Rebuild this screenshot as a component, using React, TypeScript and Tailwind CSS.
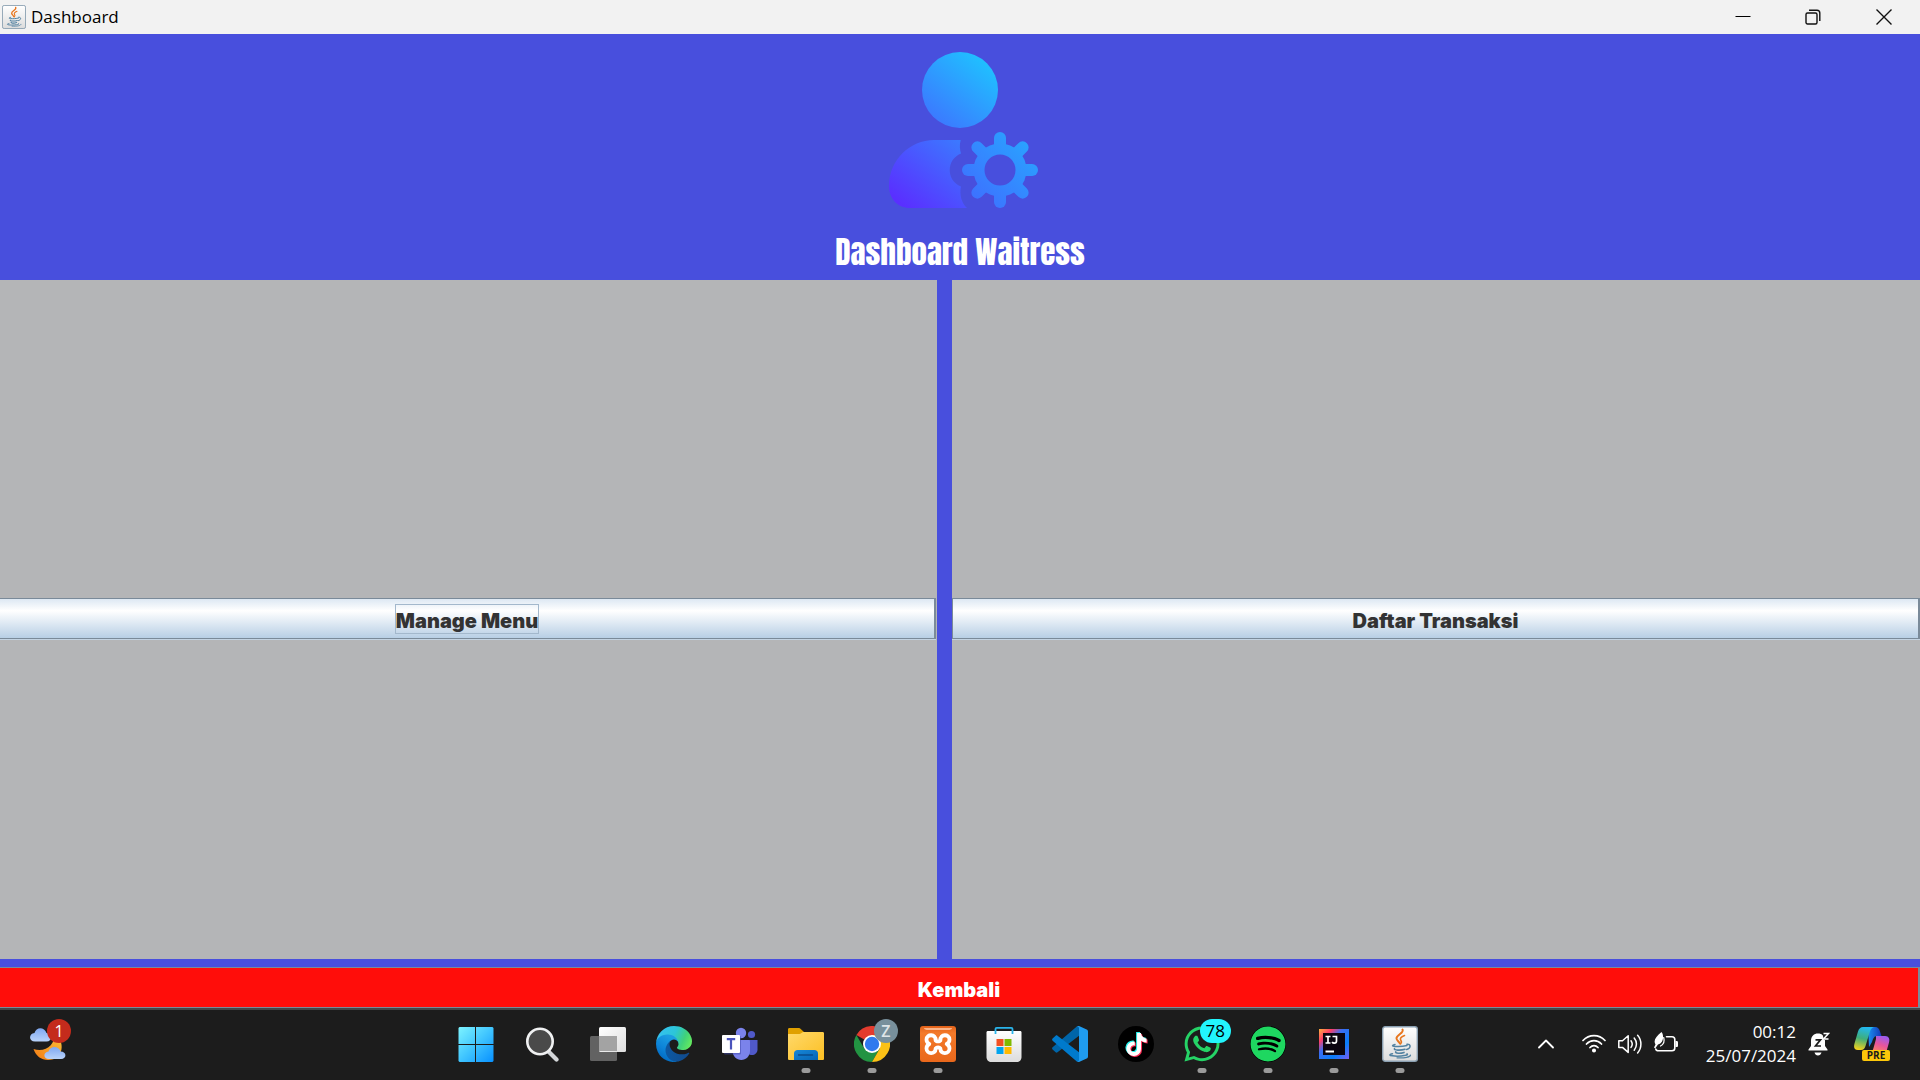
import type { ReactNode } from "react";
import { FaSpotify, FaTiktok, FaWhatsapp } from "react-icons/fa";

const UI = "font-['Open_Sans','Noto_Sans',sans-serif]";
const HEAVY = "font-['Inter','Liberation_Sans',sans-serif] font-black text-xl leading-6";

function JavaIcon({ className }: { className: string }) {
  return (
    <svg viewBox="0 0 36 36" className={className} aria-hidden="true">
      <defs>
        <linearGradient id="javaBg" x1="0" y1="0" x2="0" y2="1">
          <stop offset="0" stopColor="#ffffff" />
          <stop offset="1" stopColor="#dcdcdc" />
        </linearGradient>
      </defs>
      <rect x="0.7" y="0.7" width="34.6" height="34.6" rx="2.5" fill="url(#javaBg)" stroke="#8ba0b2" strokeWidth="1.4" />
      <g fill="none" strokeLinecap="round">
        <path d="M20.5 3.5c2 3.5-6.500 5.500-6 9 .2 2 2.500 3 3.300 5" stroke="#e8761e" strokeWidth="2" />
        <path d="M22.500 9.500c-3.500 1.300-5 3-3.600 5 .8 1.200.6 2.400-.4 3.300" stroke="#e8761e" strokeWidth="1.600" />
        <path d="M13 18.500c-3 .6-3.500 1.600 0 1.900 4 .3 8 .1 12-.9" stroke="#5382a1" strokeWidth="1.500" />
        <path d="M25 18.300c3.800-.6 4.500 3.800-.3 5.200" stroke="#5382a1" strokeWidth="1.500" />
        <path d="M12.500 22.700c-.8 1.500 5.500 2 10.500.6" stroke="#5382a1" strokeWidth="1.600" />
        <path d="M13.700 25.800c-.8 1.500 4.300 2 8.300.6" stroke="#5382a1" strokeWidth="1.600" />
        <path d="M10.500 27.700c-8 1.700 3.500 3.500 13 1.600 2-.5 2.300-.9 1.500-1.400" stroke="#5382a1" strokeWidth="1.500" />
        <path d="M28.500 29c.3 2-6 3.200-13.500 2.800" stroke="#5382a1" strokeWidth="1.200" />
      </g>
    </svg>
  );
}

function WaitressIcon() {
  const angles = [0, 45, 90, 135, 180, 225, 270, 315];
  return (
    <svg viewBox="0 0 156 156" className="size-[156px]" aria-hidden="true">
      <defs>
        <linearGradient id="userFill" gradientUnits="userSpaceOnUse" x1="14" y1="148" x2="118" y2="22">
          <stop offset="0" stopColor="#5a2fff" />
          <stop offset="0.5" stopColor="#3d75ff" />
          <stop offset="1" stopColor="#20bfff" />
        </linearGradient>
        <linearGradient id="gearFill" gradientUnits="userSpaceOnUse" x1="84" y1="152" x2="150" y2="84">
          <stop offset="0" stopColor="#3f6cff" />
          <stop offset="1" stopColor="#28a6ff" />
        </linearGradient>
        <mask id="gearMask" maskUnits="userSpaceOnUse" x="70" y="70" width="90" height="90">
          <g stroke="#fff" strokeWidth="12" strokeLinecap="round">
            {angles.map((a) => (
              <line key={a} x1="118" y1="100" x2="118" y2="86" transform={`rotate(${a} 118 118)`} />
            ))}
          </g>
          <circle cx="118" cy="118" r="26.500" fill="#fff" />
          <circle cx="118" cy="118" r="15.500" fill="#000" />
        </mask>
      </defs>
      <circle cx="78" cy="38" r="38" fill="url(#userFill)" />
      <path
        d="M52 88h26.700c-1.500 5-.8 10 .3 13.500-15 6-15 27 0 33-1.700 8 .5 16.500 6 21.500H28C16 156 7 147 7 134 7 108 28 88 52 88z"
        fill="url(#userFill)"
      />
      <rect x="70" y="70" width="86" height="86" fill="url(#gearFill)" mask="url(#gearMask)" />
    </svg>
  );
}

function WeatherIcon() {
  return (
    <svg viewBox="0 0 40 40" className="size-10" aria-hidden="true">
      <defs>
        <linearGradient id="moon" x1="1" y1="0" x2="0" y2="1">
          <stop offset="0" stopColor="#fcc43a" />
          <stop offset="1" stopColor="#f27a14" />
        </linearGradient>
        <linearGradient id="cloud" x1="0" y1="0" x2="0" y2="1">
          <stop offset="0" stopColor="#7fa8f2" />
          <stop offset="1" stopColor="#b9d3fa" />
        </linearGradient>
      </defs>
      <path d="M26 10c12 8 10 27-6 27-7 0-12-4-14.500-11C17 30 28 22 26 10z" fill="url(#moon)" />
      <path d="M7 18.500c-6.500 0-6.500-8-.5-8.500 1.500-6.500 10-6.500 12 0 6 .5 6 8.500 0 8.500z" fill="url(#cloud)" />
      <path d="M21 36c-6 0-6-7-.5-7.500 1.500-6 10.500-6 12 0 6.500 0 6.500 7.500.5 7.500z" fill="url(#cloud)" />
    </svg>
  );
}

function WindowsIcon() {
  return (
    <svg viewBox="0 0 36 36" className="size-9" aria-hidden="true">
      <defs>
        <linearGradient id="win" gradientUnits="userSpaceOnUse" x1="1" y1="1" x2="35" y2="35">
          <stop offset="0" stopColor="#7df3ff" />
          <stop offset="0.500" stopColor="#41c6ff" />
          <stop offset="1" stopColor="#0a93ff" />
        </linearGradient>
      </defs>
      <path d="M1.500 1H17v17H.5V2zM18 1h16.500l1 1v16H18zM.5 19H17v17H1.500l-1-1zM18 19h17.500v16l-1 1H18z" fill="url(#win)" />
    </svg>
  );
}

function SearchIcon() {
  return (
    <svg viewBox="0 0 36 36" className="size-9" aria-hidden="true">
      <path d="M24.500 25.500l8 8" stroke="#d3d6d9" strokeWidth="4.200" strokeLinecap="round" />
      <circle cx="16" cy="15.500" r="12.700" fill="#4a4a4a" stroke="#f0f1f2" strokeWidth="2.600" />
    </svg>
  );
}

function TaskViewIcon() {
  return (
    <svg viewBox="0 0 36 36" className="size-9" aria-hidden="true">
      <defs>
        <linearGradient id="tvFront" x1="0" y1="0" x2="1" y2="1">
          <stop offset="0" stopColor="#ffffff" />
          <stop offset="1" stopColor="#dedede" />
        </linearGradient>
      </defs>
      <rect x="0" y="10" width="27" height="25" rx="1.500" fill="#626262" />
      <rect x="9" y="1" width="27" height="25" rx="1.500" fill="url(#tvFront)" />
      <rect x="9" y="10" width="18" height="15" fill="#a3a3a3" />
    </svg>
  );
}

function EdgeIcon() {
  return (
    <svg viewBox="0 0 256 256" className="size-9" aria-hidden="true">
      <defs>
        <linearGradient id="edgeA" x1="0" y1="0.500" x2="1" y2="0.500">
          <stop offset="0" stopColor="#0c59a4" />
          <stop offset="1" stopColor="#114a8b" />
        </linearGradient>
        <linearGradient id="edgeB" x1="0.700" y1="0.200" x2="0.300" y2="1">
          <stop offset="0" stopColor="#1b9de2" />
          <stop offset="0.500" stopColor="#0d84d8" />
          <stop offset="1" stopColor="#0067c0" />
        </linearGradient>
        <linearGradient id="edgeC" x1="0" y1="0.400" x2="1" y2="0.700">
          <stop offset="0" stopColor="#35c1f1" />
          <stop offset="0.450" stopColor="#2cc5d8" />
          <stop offset="0.750" stopColor="#40d17a" />
          <stop offset="1" stopColor="#66eb5e" />
        </linearGradient>
      </defs>
      <path
        fill="url(#edgeA)"
        d="M231.070 190.540a90.270 90.270 0 0 1-10.540 4.710 101.770 101.770 0 0 1-35.900 6.460c-47.320 0-88.540-32.550-88.540-74.320a31.480 31.480 0 0 1 16.430-27.310c-42.800 1.800-53.800 46.400-53.800 72.530 0 73.880 68.090 81.370 82.760 81.370 7.910 0 19.840-2.300 27-4.560l1.310-.440a128.340 128.340 0 0 0 66.600-52.800 4 4 0 0 0-5.320-5.640z"
      />
      <path
        fill="url(#edgeB)"
        d="M105.730 241.420a79.200 79.200 0 0 1-22.740-21.340 80.720 80.720 0 0 1 29.530-120c3.120-1.470 8.450-4.130 15.540-4a32.350 32.350 0 0 1 25.690 13 31.880 31.880 0 0 1 6.360 18.660c0-.210 24.460-79.600-80-79.600-43.900 0-80 41.660-80 78.210a130.150 130.150 0 0 0 12.110 56 128 128 0 0 0 156.380 67.110 75.550 75.550 0 0 1-62.780-8z"
      />
      <path
        fill="url(#edgeC)"
        d="M152.330 148.860c-.810 1.050-3.300 2.500-3.300 5.660 0 2.610 1.700 5.120 4.720 7.230 14.380 10 41.490 8.680 41.560 8.680a59.560 59.560 0 0 0 30.270-8.350A61.380 61.380 0 0 0 256 109.230c.260-22.410-8-37.310-11.340-43.910C223.460 23.840 177.720 0 128 0A128 128 0 0 0 0 126.200c.480-36.540 36.800-66.050 80-66.050 3.500 0 23.460.340 42 10.070 16.340 8.580 24.900 18.940 30.850 29.210 6.180 10.670 7.280 24.150 7.280 29.520s-2.740 13.330-7.800 19.910z"
      />
    </svg>
  );
}

function TeamsIcon() {
  return (
    <svg viewBox="0 0 36 36" className="size-9" aria-hidden="true">
      <circle cx="29.500" cy="8.500" r="3.600" fill="#5059c9" />
      <path d="M26 14h9.500v9.500c0 3.500-2.800 5.500-5.500 5.500-1.500 0-4-.5-4-2z" fill="#5059c9" />
      <circle cx="19" cy="7" r="5.200" fill="#7b83eb" />
      <path d="M10.500 14h16.300c.8 0 1.200.4 1.200 1.200V25c0 5-4 9-8.700 9s-8.800-4-8.800-9z" fill="#7b83eb" />
      <rect x="2" y="10" width="17" height="18.500" rx="1" fill="#4048a8" opacity="0.500" />
      <rect x="0" y="9" width="18" height="18" rx="1" fill="#ffffff" />
      <path d="M4.800 13.200h8.400M9 13.200v10.300" stroke="#4b53bc" strokeWidth="2.200" />
    </svg>
  );
}

function ExplorerIcon() {
  return (
    <svg viewBox="0 0 36 36" className="size-9" aria-hidden="true">
      <defs>
        <linearGradient id="folder" x1="0" y1="0" x2="1" y2="1">
          <stop offset="0" stopColor="#ffd96b" />
          <stop offset="1" stopColor="#fcbf22" />
        </linearGradient>
        <linearGradient id="folderBlue" x1="0" y1="0" x2="1" y2="1">
          <stop offset="0" stopColor="#1787d8" />
          <stop offset="1" stopColor="#0664b4" />
        </linearGradient>
      </defs>
      <path d="M0 3.500C0 2.500.5 2 1.500 2h9c1 0 1.500.3 2.200 1L16 6v6H0z" fill="#e0a000" />
      <path d="M0 8h10.500c1.500 0 2-.3 3-1l1-.7c.5-.3 1-.3 2-.3h18c1 0 1.500.5 1.500 1.500v25c0 1-.5 1.500-1.500 1.500h-33C.5 34 0 33.500 0 32.500z" fill="url(#folder)" />
      <path d="M6 34v-6.500c0-2 1.500-3.500 3.500-3.500h17c2 0 3.500 1.500 3.500 3.500V34z" fill="url(#folderBlue)" />
      <path d="M10.500 29h14" stroke="#0a4b8c" strokeWidth="1.400" strokeLinecap="round" />
    </svg>
  );
}

function ChromeIcon() {
  return (
    <svg viewBox="0 0 36 36" className="size-9" aria-hidden="true">
      <path d="M18 18L2.400 9A18 18 0 0 1 33.600 9z" fill="#e33b2e" />
      <path d="M2.410 9A18 18 0 0 0 18 36l7.800-13.500L18 18l-7.800 4.500z" fill="#229342" />
      <path d="M18 36A18 18 0 0 0 33.600 9H18l7.800 13.500z" fill="#fbc116" />
      <circle cx="18" cy="18" r="9" fill="#fff" />
      <circle cx="18" cy="18" r="7.200" fill="#2f79ee" />
    </svg>
  );
}

function XamppIcon() {
  return (
    <svg viewBox="0 0 36 36" className="size-9" aria-hidden="true">
      <defs>
        <linearGradient id="xampp" x1="0" y1="0" x2="0" y2="1">
          <stop offset="0" stopColor="#e2621a" />
          <stop offset="0.200" stopColor="#f47a2a" />
          <stop offset="1" stopColor="#e9681c" />
        </linearGradient>
      </defs>
      <rect width="36" height="36" rx="3" fill="url(#xampp)" />
      <path d="M4 2h28c0 1.500-2 2-4 2H8C6 4 4 3.500 4 2z" fill="#fbb68a" />
      <path
        d="M15.500 14c.8-6-9-6.500-9-.5 0 2.500 1.500 3.800 2.800 4.500-1.300.7-2.800 2-2.800 4.500 0 6 9.300 6 9 .5-.1-2 5.200-2 5 0-.3 5.500 9 5.500 9-.5 0-2.500-1.500-3.800-2.800-4.500 1.300-.7 2.800-2 2.800-4.500 0-6-9.800-5.500-9 .5.200 1.800-5.200 1.800-5 0z"
        fill="none"
        stroke="#fff"
        strokeWidth="3.800"
        strokeLinejoin="round"
      />
    </svg>
  );
}

function StoreIcon() {
  return (
    <svg viewBox="0 0 36 36" className="size-9" aria-hidden="true">
      <defs>
        <linearGradient id="bag" x1="0" y1="0" x2="0" y2="1">
          <stop offset="0" stopColor="#ffffff" />
          <stop offset="1" stopColor="#dcdcdc" />
        </linearGradient>
      </defs>
      <path d="M.5 6.500c0-1 .5-1.500 1.500-1.500h32c1 0 1.500.5 1.500 1.500V31c0 3-2 5-5 5h-25c-3 0-5-2-5-5z" fill="url(#bag)" />
      <path d="M9.500 8V3c0-.8.4-1.200 1.200-1.200h14.600c.8 0 1.200.4 1.200 1.200v5" fill="none" stroke="#29b4ea" strokeWidth="1.800" />
      <path d="M10.500 13h7v7h-7z" fill="#f25022" />
      <path d="M18.500 13h7v7h-7z" fill="#7fba00" />
      <path d="M10.500 21h7v7h-7z" fill="#00a4ef" />
      <path d="M18.500 21h7v7h-7z" fill="#ffb900" />
    </svg>
  );
}

function VsCodeIcon() {
  return (
    <svg viewBox="0 0 36 36" className="size-9" aria-hidden="true">
      <path d="M27 0v9.800L5.500 26.300c-.6.500-1.400.4-1.900 0L.6 23.600c-.7-.6-.7-1.700 0-2.300L24.500.7z" fill="#0065a9" />
      <path d="M27 36v-9.800L5.500 9.700c-.6-.5-1.400-.4-1.900 0L.6 12.400c-.7.600-.7 1.700 0 2.300L24.500 35.300z" fill="#007acc" />
      <path d="M27 36c-1 .2-2-.1-2.700-.8 1 .9 2.700.2 2.700-1.200V2c0-1.400-1.700-2.100-2.700-1.200C25 .1 26 -.2 27 0l7.700 3.600c.8.400 1.300 1.200 1.300 2v24.800c0 .8-.5 1.600-1.300 2z" fill="#1f9cf0" />
    </svg>
  );
}

function TikTokIcon() {
  return (
    <span className="relative grid size-9 place-items-center rounded-full bg-black">
      <FaTiktok className="absolute top-[6px] left-[6px] size-[23px] text-[#25f4ee]" />
      <FaTiktok className="absolute top-[8px] left-[8px] size-[23px] text-[#fe2c55]" />
      <FaTiktok className="absolute top-[7px] left-[7px] size-[23px] text-white" />
    </span>
  );
}

function SpotifyIcon() {
  return (
    <span className="grid size-9 place-items-center">
      <FaSpotify className="size-9 rounded-full bg-black text-[#1ed760]" />
    </span>
  );
}

function IntelliJIcon() {
  return (
    <svg viewBox="0 0 36 36" className="size-9" aria-hidden="true">
      <defs>
        <linearGradient id="ijEdge" x1="0" y1="0" x2="1" y2="1">
          <stop offset="0" stopColor="#fdb13c" />
          <stop offset="0.220" stopColor="#fe3d6a" />
          <stop offset="0.400" stopColor="#3c6df0" />
          <stop offset="0.700" stopColor="#087cfa" />
          <stop offset="1" stopColor="#7a5cf5" />
        </linearGradient>
      </defs>
      <rect x="3" y="3" width="30" height="30" fill="url(#ijEdge)" />
      <rect x="7" y="7" width="22" height="22" fill="#0b0410" />
      <path d="M9.500 10.500h5M9.500 17h5M12 10.500V17M16.500 10.500h4V15c0 1.500-1 2.200-2.200 2.200-1 0-1.800-.5-2.200-1.200" fill="none" stroke="#fff" strokeWidth="1.700" />
      <path d="M9.500 25.500h8.500" stroke="#fff" strokeWidth="2" />
    </svg>
  );
}

function CopilotIcon() {
  return (
    <svg viewBox="0 0 36 36" className="size-9" aria-hidden="true">
      <defs>
        <linearGradient id="cpLeft" x1="0.500" y1="0" x2="0.300" y2="1">
          <stop offset="0" stopColor="#22b8f0" />
          <stop offset="0.500" stopColor="#3fae7a" />
          <stop offset="1" stopColor="#f3d21c" />
        </linearGradient>
        <linearGradient id="cpRight" x1="0.700" y1="0" x2="0.300" y2="1">
          <stop offset="0" stopColor="#9a5cf0" />
          <stop offset="0.500" stopColor="#e9559b" />
          <stop offset="1" stopColor="#ff8a5c" />
        </linearGradient>
        <linearGradient id="cpTop" x1="0" y1="0" x2="1" y2="0">
          <stop offset="0" stopColor="#1b8ff0" />
          <stop offset="1" stopColor="#1238b8" />
        </linearGradient>
      </defs>
      <path d="M14 1h7c3 0 4 1.500 5 4.500L27.500 10H23c-3 0-4 3-5 6l-3 5z" fill="url(#cpTop)" />
      <path d="M9 1h11c-2.500.5-3.500 3-4.500 6l-4 13c-.8 2.500-2 4-4.500 4H4c-4 0-4.500-3-3.500-6.500L4 5.500C5 2.500 6.500 1 9 1z" fill="url(#cpLeft)" />
      <path d="M22 10h9c4 0 5 3 4 6.500L32 27H16c2 0 2.500-2 3.500-5l2.500-9z" fill="url(#cpRight)" />
      <rect x="8" y="24" width="28" height="11" rx="2" fill="#fcc70a" />
      <text x="22" y="33" textAnchor="middle" fontFamily="Open Sans, sans-serif" fontWeight="700" fontSize="10" fill="#1a1a1a">PRE</text>
    </svg>
  );
}

function WifiIcon() {
  return (
    <svg viewBox="0 0 24 24" className="size-6" fill="none" stroke="#fff" strokeWidth="1.700" strokeLinecap="round" aria-hidden="true">
      <path d="M1 8.500c6-6.500 16-6.500 22 0M4.500 12c4.200-4.600 10.800-4.600 15 0M8 15.500c2.300-2.500 5.700-2.500 8 0" />
      <circle cx="12" cy="18.500" r="1.200" fill="#fff" />
    </svg>
  );
}

function SpeakerIcon() {
  return (
    <svg viewBox="0 0 24 24" className="size-6" fill="none" stroke="#fff" strokeWidth="1.500" strokeLinecap="round" strokeLinejoin="round" aria-hidden="true">
      <path d="M.8 8.800h3.700l5.700-5v16.600l-5.700-5H.8z" />
      <path d="M13 8.800c1.500 2 1.500 4.600 0 6.600M16.200 6c3 3.600 3 8.600 0 12.200M19.600 3.200c4.400 5 4.400 12.800 0 17.800" />
    </svg>
  );
}

function BatteryIcon() {
  return (
    <svg viewBox="0 0 24 24" className="size-6" fill="none" aria-hidden="true">
      <path d="M12.500 4.800h5.500c1.800 0 2.800 1 2.800 2.800v8.400c0 1.800-1 2.800-2.800 2.800H4.500c-1.500 0-2.500-.6-2.700-1.700" stroke="#fff" strokeWidth="1.600" strokeLinecap="round" />
      <path d="M21.500 9h1c1 0 1.500.5 1.500 1.500v3c0 1-.5 1.500-1.500 1.500h-1z" fill="#fff" />
      <path d="M7.500 0c2.500 2.500 2.500 11-3.500 12.500L1.200 16.500 0 15.500l1.500-3C-1 8.500 2 4.500 7.500 0z" fill="#fff" />
      <path d="M9.700 5.500c1 3.500-.3 7-3.200 8.500" stroke="#fff" strokeWidth="1.200" strokeLinecap="round" />
    </svg>
  );
}

function BellIcon() {
  return (
    <svg viewBox="0 0 22 24" className="h-6 w-[22px]" aria-hidden="true">
      <path d="M3 9C3 4 6 1.500 10 1.500S17 4 17 9v5l2.500 3.500v1H.5v-1L3 14zM6.500 20.500h7c-.5 2-1.800 3-3.500 3s-3-1-3.500-3z" fill="#fff" />
      <path d="M14 0h8v8h-6z" fill="#1c1c1c" />
      <path d="M15.500 1.500h5l-5 5.500h5" fill="none" stroke="#fff" strokeWidth="1.500" />
      <path d="M7.500 7.800h5L7.500 14h5.500" fill="none" stroke="#1c1c1c" strokeWidth="1.700" />
    </svg>
  );
}

type TaskItem = { name: string; icon: ReactNode; running?: boolean; badge?: ReactNode };

const tasks: TaskItem[] = [
  { name: "Start", icon: <WindowsIcon /> },
  { name: "Search", icon: <SearchIcon /> },
  { name: "Task View", icon: <TaskViewIcon /> },
  { name: "Microsoft Edge", icon: <EdgeIcon /> },
  { name: "Microsoft Teams", icon: <TeamsIcon /> },
  { name: "File Explorer", icon: <ExplorerIcon />, running: true },
  {
    name: "Google Chrome",
    icon: <ChromeIcon />,
    running: true,
    badge: (
      <span className="absolute top-[11px] right-[7px] grid size-6 place-items-center rounded-full bg-[#78909c] text-base leading-6 font-semibold text-[#dfe5e8]">
        Z
      </span>
    ),
  },
  { name: "XAMPP Control Panel", icon: <XamppIcon />, running: true },
  { name: "Microsoft Store", icon: <StoreIcon /> },
  { name: "Visual Studio Code", icon: <VsCodeIcon /> },
  { name: "TikTok", icon: <TikTokIcon /> },
  {
    name: "WhatsApp",
    icon: <FaWhatsapp className="size-10 text-[#25d366]" />,
    running: true,
    badge: (
      <span className="absolute top-[11px] right-1 h-6 w-[31px] rounded-full bg-[#22f5fd] text-center text-[17px] leading-6 text-black">
        78
      </span>
    ),
  },
  { name: "Spotify", icon: <SpotifyIcon />, running: true },
  { name: "IntelliJ IDEA", icon: <IntelliJIcon />, running: true },
  { name: "Java", icon: <JavaIcon className="size-9" />, running: true },
];

function TitleBar() {
  return (
    <header className={`flex h-[34px] items-center bg-[#f2f2f2] text-black ${UI}`}>
      <JavaIcon className="ml-0.5 size-6" />
      <span className="ml-1 flex-1 pl-px text-[17px] leading-6">Dashboard</span>
      <button type="button" aria-label="Minimize" className="grid h-full w-[70px] place-items-center">
        <svg viewBox="0 0 16 16" className="size-4" stroke="#000" aria-hidden="true">
          <path d="M0.500 7.500h15" />
        </svg>
      </button>
      <button type="button" aria-label="Restore" className="grid h-full w-[70px] place-items-center">
        <svg viewBox="0 0 16 16" className="size-4" fill="none" stroke="#111" strokeWidth="1.400" aria-hidden="true">
          <rect x="1" y="4" width="11" height="11" rx="1.500" />
          <path d="M4 1.200h8c1.800 0 2.800 1 2.800 2.800v8" />
        </svg>
      </button>
      <button type="button" aria-label="Close" className="grid h-full w-[72px] place-items-center">
        <svg viewBox="0 0 16 16" className="size-4" stroke="#111" strokeWidth="1.400" aria-hidden="true">
          <path d="M0.500 0.500l15 15M15.500 0.500l-15 15" />
        </svg>
      </button>
    </header>
  );
}

function MenuButton({ children, focused }: { children: string; focused?: boolean }) {
  return (
    <button
      type="button"
      className={`flex h-[41px] w-full items-center justify-center border-y border-r-2 border-[#7a8a99] bg-linear-to-b from-[#dde8f3] via-white via-30% to-[#b8cfe5] shadow-[0_1px_0_#c3d3e2] ${focused ? "" : "border-l"}`}
    >
      <span className={`border pt-1 text-[#333333] ${focused ? "border-[#a3b8cc]" : "border-transparent"} ${HEAVY}`}>
        {children}
      </span>
    </button>
  );
}

function Taskbar() {
  return (
    <footer className={`grid h-[72px] grid-cols-[1fr_auto_1.1fr] border-t-2 border-[#444648] bg-[#1c1c1c] text-white ${UI}`}>
      <div className="flex items-center pl-7">
        <button type="button" aria-label="Weather" className="relative -mt-1">
          <WeatherIcon />
          <span className="absolute -top-1 right-[-3px] size-6 rounded-full bg-[#c42b1c] text-center text-base leading-6">1</span>
        </button>
      </div>
      <nav className="flex" aria-label="Taskbar">
        {tasks.map((t) => (
          <button key={t.name} type="button" aria-label={t.name} className="relative -mt-0.5 grid w-[66px] place-items-center">
            {t.icon}
            {t.badge}
            {t.running && <span className="absolute bottom-[7px] left-1/2 h-[5px] w-[9px] -translate-x-1/2 rounded-full bg-[#9a9a9a]" />}
          </button>
        ))}
      </nav>
      <div className="-mt-0.5 flex items-center justify-end pr-[30px]">
        <button type="button" aria-label="Show hidden icons" className="mr-7">
          <svg viewBox="0 0 16 16" className="size-4" fill="none" stroke="#fff" strokeWidth="1.800" strokeLinecap="round" strokeLinejoin="round" aria-hidden="true">
            <path d="M1 11.500L8 4.500l7 7" />
          </svg>
        </button>
        <button type="button" aria-label="Quick settings" className="flex gap-3">
          <WifiIcon />
          <SpeakerIcon />
          <BatteryIcon />
        </button>
        <time dateTime="2024-07-25T00:12" className="ml-7 text-right text-[17px] leading-6">
          <span className="block">00:12</span>
          <span className="block">25/07/2024</span>
        </time>
        <button type="button" aria-label="Notifications" className="ml-3">
          <BellIcon />
        </button>
        <button type="button" aria-label="Copilot" className="ml-6">
          <CopilotIcon />
        </button>
      </div>
    </footer>
  );
}

export default function App() {
  return (
    <div className="flex min-h-screen flex-col bg-[#484fdd]">
      <TitleBar />
      <section className="flex flex-col items-center pt-[18px] pb-2 text-white">
        <WaitressIcon />
        <h1 className="mt-6 font-['Anton','Roboto_Condensed',sans-serif] text-[31px] leading-10">Dashboard Waitress</h1>
      </section>
      <main className="flex flex-1 flex-col gap-2">
        <div className="grid flex-1 grid-cols-[937fr_968fr] gap-[15px]">
          <div className="flex items-center bg-[#b4b5b7] pr-px pb-0.5">
            <MenuButton focused>Manage Menu</MenuButton>
          </div>
          <div className="flex items-center bg-[#b4b5b7] pb-0.5">
            <MenuButton>Daftar Transaksi</MenuButton>
          </div>
        </div>
        <button type="button" className={`h-[41px] border-y border-r-2 border-[#7a8a99] bg-[#ff0d0a] pt-1 text-white ${HEAVY}`}>
          Kembali
        </button>
      </main>
      <Taskbar />
    </div>
  );
}
